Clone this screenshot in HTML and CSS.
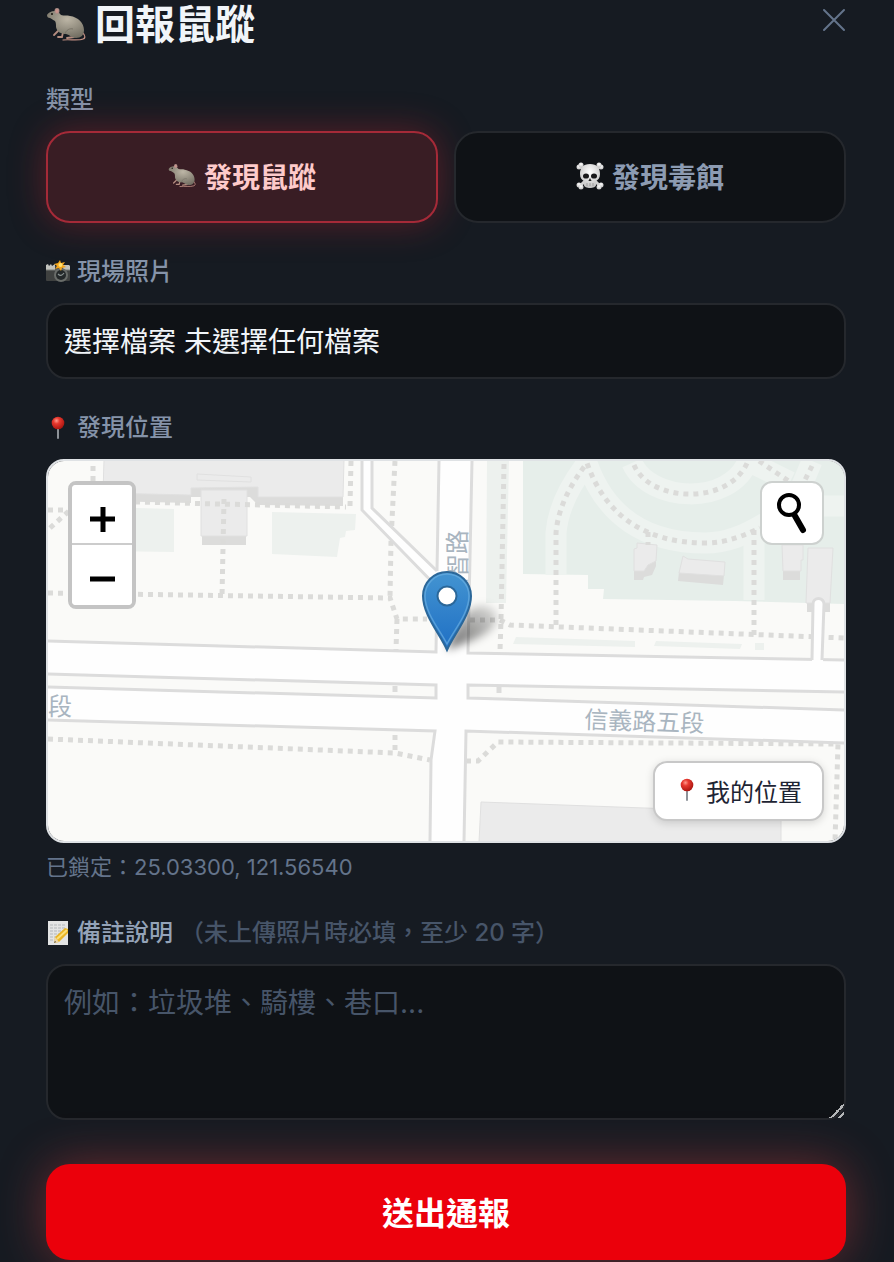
FILE: index.html
```
<!DOCTYPE html>
<html lang="zh-Hant">
<head>
    <meta charset="UTF-8">
    <meta name="viewport" content="width=device-width, initial-scale=1.0">
    <title>回報鼠蹤</title>
    <link rel="stylesheet" href="styles.css">
</head>
<body>
    <!-- Shared icons -->
    <svg class="sprite" aria-hidden="true">
        <defs>
            <radialGradient id="rat-fur" cx="55%" cy="30%" r="75%">
                <stop offset="0" stop-color="#bdb6a6"/>
                <stop offset="1" stop-color="#6f6b5f"/>
            </radialGradient>
            <radialGradient id="pin-red" cx="38%" cy="32%" r="70%">
                <stop offset="0" stop-color="#ff9a8c"/>
                <stop offset="0.35" stop-color="#e8392f"/>
                <stop offset="1" stop-color="#a8150f"/>
            </radialGradient>
            <radialGradient id="bone" cx="50%" cy="35%" r="70%">
                <stop offset="0" stop-color="#ffffff"/>
                <stop offset="1" stop-color="#bcbcbc"/>
            </radialGradient>
        </defs>
        <symbol id="icon-rat" viewBox="0 0 40 40">
            <path d="M36 27c3 3 4 6 1 7-5 2-14 0-20 1" fill="none" stroke="#c08e82" stroke-width="1.200" stroke-linecap="round"/>
            <path d="M12 26l-4 4 M17 27l-1 5h-4 M28 32l-7 1" fill="none" stroke="#b58d80" stroke-width="1.800" stroke-linecap="round"/>
            <path d="M1 10c1-2 4-4 8-4 3 0 4 2 6 4 3 1 6 0 9 1 8 1 14 7 14 14 0 5-3 8-8 8-4 0-6-3-10-4-5 0-9-2-10-7 0-3 0-4-1-6-2-1-3-2-5-3-2 0-3-1-3-3z" fill="url(#rat-fur)"/>
            <path d="M19 29c1-4 5-6 8-5" fill="none" stroke="#797468"/>
            <ellipse cx="11" cy="6" rx="2.500" ry="3" fill="#a98d86"/>
            <ellipse cx="11" cy="6" rx="1.500" ry="2" fill="#c9938c"/>
            <circle cx="6" cy="9" r="1" fill="#16130f"/>
        </symbol>
        <symbol id="icon-skull" viewBox="0 0 28 28">
            <path d="M4 4l20 20M24 4L4 24" stroke="#d2d2d2" stroke-width="3"/>
            <g fill="url(#bone)">
                <circle cx="3" cy="5" r="2.5"/><circle cx="5" cy="3" r="2.5"/>
                <circle cx="25" cy="5" r="2.5"/><circle cx="23" cy="3" r="2.5"/>
                <circle cx="3" cy="23" r="2.5"/><circle cx="5" cy="25" r="2.5"/>
                <circle cx="25" cy="23" r="2.5"/><circle cx="23" cy="25" r="2.5"/>
                <path d="M14 2c7 0 10 4 10 10 0 4-2 6-4 7v4c0 2-3 3-6 3s-6-1-6-3v-4c-2-1-4-3-4-7 0-6 3-10 10-10z"/>
            </g>
            <ellipse cx="10" cy="14" rx="3" ry="2.6" fill="#18181a"/>
            <ellipse cx="18" cy="14" rx="3" ry="2.6" fill="#18181a"/>
            <path d="M14 16l-1.6 3h3.2z" fill="#222"/>
            <path d="M11 21v3M14 21v3M17 21v3" stroke="#8a8a8a" stroke-width="0.7"/>
        </symbol>
        <symbol id="icon-camera" viewBox="0 0 24 24">
            <rect x="0" y="6" width="24" height="15" rx="1" fill="#3f4140"/>
            <path d="M0 10V5l2-1 1 2 2-2 1 2 3-2v6zM17 5h6l1 1v4h-7z" fill="#c2c3be"/>
            <path d="M0 10h24" stroke="#7d7f7b"/>
            <circle cx="15" cy="15" r="7" fill="#696c69"/>
            <circle cx="15" cy="15" r="5" fill="#242829"/>
            <path d="M12 14c2 2 4 2 6-1" fill="none" stroke="#8b9493" stroke-width="1.2"/>
            <path d="M14 0l1 3 4-1-2 3 3 2-4 1-1 3-2-3-4 1 2-3-3-2 4-1z" fill="#f3a51d"/>
            <circle cx="14.500" cy="5" r="2" fill="#ffe070"/>
        </symbol>
        <symbol id="icon-pin" viewBox="0 0 24 24">
            <path d="M12 10v12" stroke="#8d9298" stroke-width="2" stroke-linecap="round"/>
            <circle cx="12" cy="7" r="6.300" fill="url(#pin-red)"/>
        </symbol>
        <symbol id="icon-memo" viewBox="0 0 24 24">
            <rect x="2" y="0" width="20" height="24" fill="#e3e4e4"/>
            <path d="M4 4h16M4 7h16M4 10h13M4 13h9M4 16h6M4 19h4" stroke="#b3b7ba" stroke-width="1" stroke-dasharray="3 1"/>
            <path d="M8 22l1-6L19 7l3 1v4L13 21z" fill="#eab526"/>
            <path d="M11 18L21 9" stroke="#fbe07a" stroke-width="2"/>
            <path d="M8 22l1-6 4 5z" fill="#ecd6a8"/>
            <path d="M8 22l1-2 1 1z" fill="#333"/>
        </symbol>
    </svg>

    <form class="report">
        <header class="report-header">
            <h1 class="report-title"><svg class="icon-title" aria-hidden="true"><use href="#icon-rat"/></svg>回報鼠蹤</h1>
            <button type="button" class="close-btn" aria-label="關閉">
                <svg viewBox="0 0 24 24" aria-hidden="true"><path d="M2 2l20 20M22 2L2 22"/></svg>
            </button>
        </header>

        <div class="field">
            <div class="field-label" id="type-label">類型</div>
            <div class="type-row" role="group" aria-labelledby="type-label">
                <button type="button" class="type-btn active" aria-pressed="true"><svg class="icon-btn" aria-hidden="true"><use href="#icon-rat"/></svg>發現鼠蹤</button>
                <button type="button" class="type-btn" aria-pressed="false"><svg class="icon-btn" aria-hidden="true"><use href="#icon-skull"/></svg>發現毒餌</button>
            </div>
        </div>

        <div class="field">
            <label class="field-label" for="photo"><svg class="icon" aria-hidden="true"><use href="#icon-camera"/></svg>現場照片</label>
            <label class="file-box">
                <input type="file" id="photo" class="file-input" accept="image/*">
                <span>選擇檔案</span>
                <span id="file-name">未選擇任何檔案</span>
            </label>
        </div>

        <div class="field">
            <div class="field-label"><svg class="icon" aria-hidden="true"><use href="#icon-pin"/></svg>發現位置</div>
            <div class="map">
                <svg class="map-canvas" viewBox="48 461 796 380" preserveAspectRatio="xMidYMid slice" role="img" aria-label="地圖">
                    <defs>
                        <linearGradient id="marker-blue" x1="0" y1="0" x2="0" y2="1">
                            <stop offset="0" stop-color="#4394d1"/>
                            <stop offset="1" stop-color="#1f6fc4"/>
                        </linearGradient>
                        <linearGradient id="marker-shade" x1="0" y1="1" x2="1" y2="0">
                            <stop offset="0" stop-color="#000" stop-opacity="0.6"/>
                            <stop offset="1" stop-color="#000" stop-opacity="0.1"/>
                        </linearGradient>
                        <filter id="soft" x="-40%" y="-40%" width="180%" height="180%">
                            <feGaussianBlur stdDeviation="4"/>
                        </filter>
                    </defs>
                    <rect x="48" y="461" width="796" height="380" fill="#fafaf8"/>

                    <!-- Parks -->
                    <path d="M523 461H844V604L735 601 603 599 604 589H588V575L523 574z" fill="#e6eeea"/>
                    <g fill="#edf1ee">
                        <path d="M100 507L174 509V552L100 551z"/>
                        <path d="M272 512L356 514 355 530 346 531 345 537 340 538 337 557 272 554z"/>
                        <path d="M487 461H509L506 603H486z"/>
                        <path d="M516 637L635 641V647L513 644z"/>
                        <path d="M656 641L742 644 740 649 654 646zM755 643H764V650H755z"/>
                    </g>
                    <g fill="none" stroke="#eef3f0" stroke-width="21">
                        <path d="M556 575V533C558 508 570 485 587 463C605 515 645 543 705 543C727 543 745 535 765 523"/>
                        <path d="M632 463C650 503 730 506 748 461L790 482M812 461L800 490"/>
                        <path d="M754 530V600M800 506H844"/>
                    </g>

                    <!-- Buildings -->
                    <g fill="#dcdcdb">
                        <path d="M103 485L191 495V503L103 501z"/>
                        <path d="M191 487H258V497L343 497V506L258 505 250 497H191z"/>
                        <path d="M202 534H246V545H202zM634 568L656 560V566L652 575 644 577 643 580H634zM679 572L724 575 723 585 678 581zM783 571H800V580H783zM807 602H830V612H807z"/>
                    </g>
                    <g fill="#ebebeb" stroke="#e0e0e0">
                        <path d="M104 460H344L343 497 258 497V487L191 488V495L103 493z"/>
                        <path d="M197 474L251 477V482L197 480z"/>
                        <path d="M201 490H247V536H201z"/>
                        <path d="M637 543L657 545 656 561 648 565 644 571H634V549L637 548z"/>
                        <path d="M683 556L688 559 725 562 724 576 679 573z"/>
                        <path d="M782 545H803V560H801V571H783z"/>
                        <path d="M808 548H833L830 603H806z"/>
                        <path d="M481 802L781 813V842H479z"/>
                    </g>

                    <!-- Footpaths -->
                    <g class="footpath">
                        <path d="M93 466V485M48 510H68M50 528L70 510"/>
                        <path d="M135 502L346 507M350 506L351 461M224 499L222 597"/>
                        <path d="M48 593L390 598 397 619H427M395 461L391 540 390 598M397 619L396 650M395 687V692M395 735V752"/>
                        <path d="M504 464L501 620 500 651M470 620H500L510 625 844 638M499 688V693"/>
                        <path d="M556 625V533C558 508 570 485 587 463C605 515 645 543 705 543C727 543 745 535 760 528"/>
                        <path d="M634 465C650 503 730 506 748 461M759 461L790 482M812 466L805 480M648 532V545"/>
                        <path d="M754 530V636"/>
                        <path d="M48 739L395 753 430 760M466 761H478L498 742 838 744 835 841"/>
                    </g>

                    <!-- Roads -->
                    <g fill="#fefefe">
                        <path d="M438 461H472L468 653 844 660V742L466 731 464 841H430V760L435 731 48 720V641L436 652z"/>
                        <path d="M363 461H372V508L437 572V587L363 510z"/>
                    </g>
                    <g fill="#fafaf8">
                        <path d="M48 674L436 685V698L48 687z"/>
                        <path d="M468 685L844 692V710L468 698z"/>
                    </g>
                    <g class="road-edge">
                        <path d="M439 461L437 571M472 461L468 653 844 660"/>
                        <path d="M437 587L436 652 47 641"/>
                        <path d="M362 461V510L437 587M372 461V508L437 571"/>
                        <path d="M47 674L436 685V698L47 687"/>
                        <path d="M845 692L468 685V698L845 710"/>
                        <path d="M47 720L435 731 431 760 430 842M464 842L466 731 845 743"/>
                    </g>
                    <path d="M395 686v6M499 687v6" stroke="#dcdcdb" stroke-width="5"/>
                    <path d="M812 664L813 604a5 5 0 0 1 11 0L823 664z" fill="#fefefe"/>
                    <path class="road-edge" d="M812 660L813 604a5 5 0 0 1 11 0L822 660"/>

                    <g class="map-text">
                        <text x="48" y="715">段</text>
                        <text x="584" y="728" transform="rotate(2 584 728)">信義路五段</text>
                        <text x="466" y="602" transform="rotate(-90 466 602)">松智路</text>
                    </g>

                    <!-- Marker -->
                    <path d="M447 650C454 632 462 612 476 607C490 603 500 611 496 622C491 636 466 642 447 650z" fill="url(#marker-shade)" filter="url(#soft)"/>
                    <path d="M447 650C440 634 423 615 423 596a24 24 0 0 1 48 0C471 615 454 634 447 650z" fill="url(#marker-blue)" stroke="#2b6799" stroke-width="2"/>
                    <path d="M447 644C440 630 425 613 425 596a22 22 0 0 1 44 0C469 613 454 630 447 644z" fill="none" stroke="#6aaee0" stroke-width="1.500" opacity="0.700"/>
                    <circle cx="447" cy="596" r="9.500" fill="#fff" stroke="#2b6799" stroke-width="2"/>
                </svg>

                <div class="map-zoom">
                    <button type="button" aria-label="放大"><svg viewBox="0 0 60 60" aria-hidden="true"><path d="M18 34H43M31 22V47"/></svg></button>
                    <button type="button" aria-label="縮小"><svg viewBox="0 0 60 60" aria-hidden="true"><path d="M18 34H43"/></svg></button>
                </div>
                <button type="button" class="map-search" aria-label="搜尋">
                    <svg viewBox="0 0 60 60" aria-hidden="true"><circle cx="27" cy="22" r="10"/><path d="M33 33L41 47"/></svg>
                </button>
                <button type="button" class="map-locate"><svg class="icon" aria-hidden="true"><use href="#icon-pin"/></svg>我的位置</button>
            </div>
            <p class="map-status">已鎖定：25.03300, 121.56540</p>
        </div>

        <div class="field">
            <label class="field-label" for="note"><svg class="icon" aria-hidden="true"><use href="#icon-memo"/></svg><span class="label-strong">備註說明</span><span class="label-hint">（未上傳照片時必填，至少 20 字）</span></label>
            <textarea class="note" id="note" placeholder="例如：垃圾堆、騎樓、巷口..."></textarea>
        </div>

        <button type="submit" class="submit-btn">送出通報</button>
    </form>

    <script>
        // Show the chosen file name in the box
        document.getElementById("photo").addEventListener("change", function () {
            document.getElementById("file-name").innerText = this.files.length ? this.files[0].name : "未選擇任何檔案";
        });
    </script>
</body>
</html>
```
FILE: styles.css
```
* {
    box-sizing: border-box;
}
body {
    margin: 0;
    min-height: 100vh;
    background-color: #161b22;
    color: #f1f5f9;
    font-family: Inter, "Noto Sans CJK TC", sans-serif;
}
button, textarea {
    font-family: inherit;
}
button {
    cursor: pointer;
}
.sprite {
    position: absolute;
    width: 0;
    height: 0;
}
.report {
    padding: 0 48px 2px 46px;
}
.report-header {
    display: flex;
    justify-content: space-between;
    align-items: flex-start;
    margin-bottom: 33px;
}
.report-title {
    display: flex;
    align-items: center;
    gap: 9px;
    margin: 0;
    font-size: 40px;
    line-height: 50px;
    font-weight: 700;
}
.icon-title {
    width: 40px;
    height: 40px;
}
.icon-btn {
    width: 28px;
    height: 28px;
}
.icon {
    width: 24px;
    height: 24px;
}
.close-btn {
    padding: 8px 0;
    border: none;
    background: none;
}
.close-btn svg {
    display: block;
    width: 24px;
    height: 24px;
    stroke: #64748b;
    stroke-width: 2;
    stroke-linecap: round;
}
.field {
    margin-bottom: 32px;
}
.field-label {
    display: flex;
    align-items: center;
    gap: 7px;
    margin-bottom: 14px;
    font-size: 24px;
    line-height: 34px;
    font-weight: 500;
    color: #8593a9;
}
.label-strong {
    color: #94a3b8;
}
.label-hint {
    color: #475569;
}
.type-row {
    display: grid;
    grid-template-columns: 1fr 1fr;
    gap: 16px;
}
.type-btn {
    display: flex;
    justify-content: center;
    align-items: center;
    gap: 8px;
    height: 92px;
    padding: 0 0 2px;
    border: 2px solid #25282d;
    border-radius: 24px;
    background-color: #0f1216;
    color: #8c9bb2;
    font-size: 28px;
    font-weight: 700;
}
.type-btn.active {
    border-color: #a52a38;
    background-color: #391d24;
    color: #fecaca;
    box-shadow: 0 0 36px rgba(220, 38, 48, 0.35);
}
.file-box {
    display: flex;
    align-items: center;
    gap: 8px;
    height: 76px;
    padding: 0 16px 2px;
    border: 2px solid #25282d;
    border-radius: 20px;
    background-color: #0f1216;
    font-size: 28px;
    cursor: pointer;
}
.file-input {
    position: absolute;
    width: 1px;
    height: 1px;
    opacity: 0;
}
.map {
    position: relative;
    height: 384px;
    overflow: hidden;
    border: 2px solid #dfe2e5;
    border-radius: 18px;
}
.map-canvas {
    display: block;
    width: 100%;
    height: 100%;
}
.footpath {
    fill: none;
    stroke: #dbdbd9;
    stroke-width: 5;
    stroke-dasharray: 5 5;
}
.road-edge {
    fill: none;
    stroke: #dcdcdc;
    stroke-width: 3;
}
.map-text {
    fill: #a9b5c0;
    font-size: 24px;
}
.map-zoom {
    position: absolute;
    top: 20px;
    left: 20px;
    overflow: hidden;
    border: 4px solid #c4c4c4;
    border-radius: 8px;
}
.map-zoom button {
    display: block;
    width: 60px;
    height: 60px;
    padding: 0;
    border: none;
    background-color: #fff;
}
.map-zoom button:first-child {
    border-bottom: 2px solid #ccc;
}
.map-zoom svg, .map-search svg {
    display: block;
    width: 60px;
    height: 60px;
    fill: none;
    stroke: #000;
    stroke-width: 5;
}
.map-search {
    position: absolute;
    top: 20px;
    right: 20px;
    padding: 0;
    border: 2px solid #cdd1cf;
    border-radius: 12px;
    background-color: #fff;
}
.map-search svg {
    stroke-width: 4;
    stroke-linecap: round;
}
.map-search path {
    stroke-width: 6;
}
.map-locate {
    position: absolute;
    right: 20px;
    bottom: 20px;
    display: flex;
    align-items: center;
    gap: 7px;
    height: 60px;
    padding: 0 20px 2px;
    border: 2px solid #c8c8c8;
    border-radius: 14px;
    background-color: #fff;
    color: #1e2433;
    font-size: 24px;
    box-shadow: 0 2px 8px rgba(0, 0, 0, 0.15);
}
.map-status {
    margin: 8px 0 0;
    font-size: 22px;
    line-height: 33px;
    color: #64748b;
}
.note {
    display: block;
    width: 100%;
    height: 156px;
    padding: 16px;
    border: 2px solid #25282d;
    border-radius: 20px;
    background-color: #0f1216;
    color: #f1f5f9;
    font-size: 28px;
    line-height: 42px;
    resize: vertical;
}
.note::placeholder {
    color: #475569;
}
.note::-webkit-resizer {
    background: linear-gradient(135deg, transparent 50%, #b4b6b8 50%, #b4b6b8 60%, transparent 60%, transparent 78%, #b4b6b8 78%, #b4b6b8 88%, transparent 88%);
}
.submit-btn {
    display: block;
    width: 100%;
    height: 96px;
    margin-top: 44px;
    padding: 0 0 2px;
    border: none;
    border-radius: 24px;
    background-color: #eb000b;
    color: #fff;
    font-size: 32px;
    font-weight: 700;
    box-shadow: 0 0 48px rgba(239, 68, 68, 0.4);
}
```
